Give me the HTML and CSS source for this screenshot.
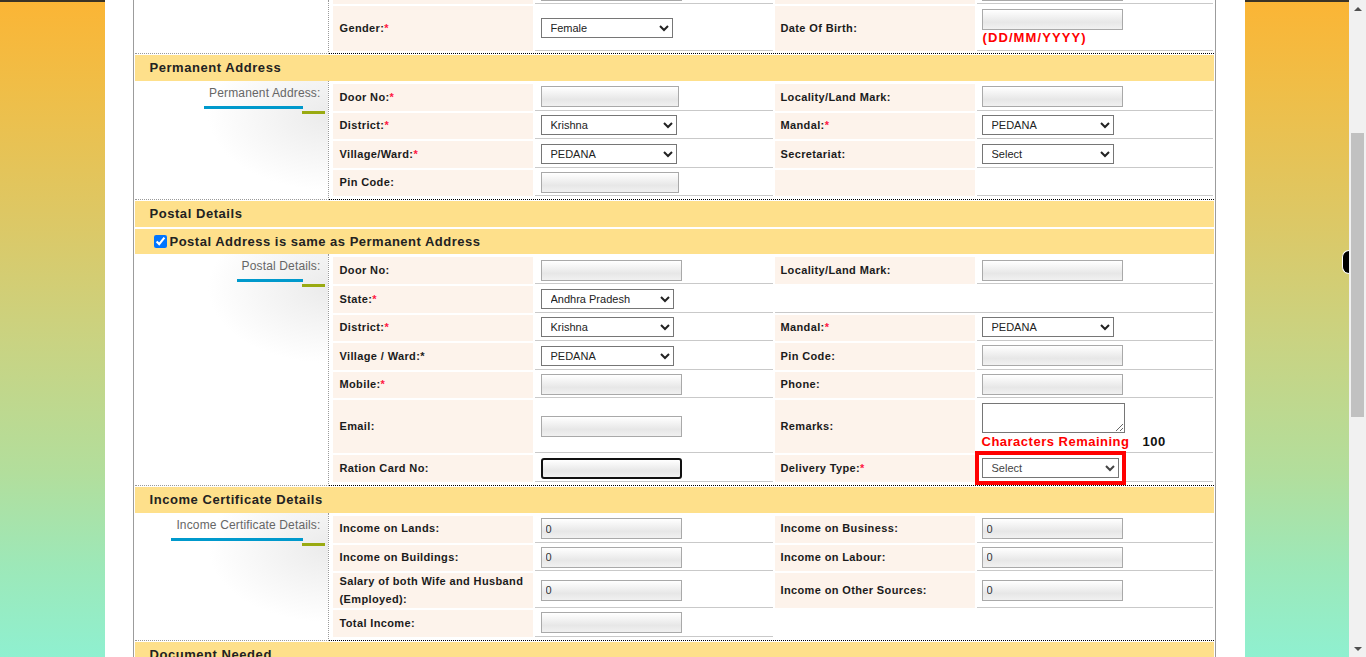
FILE: index.html
```html
<!DOCTYPE html>
<html lang="en">
<head>
<meta charset="utf-8">
<title>Income Certificate Application</title>
<link rel="stylesheet" href="styles.css">
</head>
<body>
<div class="screen">
  <div class="page">
    <div class="container">
      <div class="form">

        <section class="sec sec-first">
          <div class="sec-body">
            <div class="caption caption-plain"></div>
            <div class="fields">
              <div class="grid grid-first">
                <div class="lbl partial"></div>
                <div class="val partial bottom"><input class="txt" type="text"></div>
                <div class="lbl l2 partial"></div>
                <div class="val v2 partial bottom"><input class="txt push" type="text"></div>

                <div class="lbl">Gender:<span class="req">*</span></div>
                <div class="val"><select class="sel w132"><option>Female</option></select></div>
                <div class="lbl l2">Date Of Birth:</div>
                <div class="val v2 stack"><input class="txt" type="text"><div class="hint">(DD/MM/YYYY)</div></div>
              </div>
            </div>
          </div>
        </section>

        <section class="sec">
          <div class="sec-head">Permanent Address</div>
          <div class="sec-body">
            <div class="caption"><span class="cap-title">Permanent Address:</span></div>
            <div class="fields">
              <div class="grid">
                <div class="lbl">Door No:<span class="req">*</span></div>
                <div class="val"><input class="txt w138" type="text"></div>
                <div class="lbl l2">Locality/Land Mark:</div>
                <div class="val v2"><input class="txt" type="text"></div>

                <div class="lbl">District:<span class="req">*</span></div>
                <div class="val"><select class="sel w136"><option>Krishna</option></select></div>
                <div class="lbl l2">Mandal:<span class="req">*</span></div>
                <div class="val v2"><select class="sel w132"><option>PEDANA</option></select></div>

                <div class="lbl">Village/Ward:<span class="req">*</span></div>
                <div class="val"><select class="sel w136"><option>PEDANA</option></select></div>
                <div class="lbl l2">Secretariat:</div>
                <div class="val v2"><select class="sel w132"><option>Select</option></select></div>

                <div class="lbl">Pin Code:</div>
                <div class="val"><input class="txt w138" type="text"></div>
                <div class="lbl l2"></div>
                <div class="val v2"></div>
              </div>
            </div>
          </div>
        </section>

        <section class="sec">
          <div class="sec-head">Postal Details</div>
          <label class="sec-check"><input type="checkbox" checked>Postal Address is same as Permanent Address</label>
          <div class="sec-body">
            <div class="caption"><span class="cap-title">Postal Details:</span></div>
            <div class="fields">
              <div class="grid">
                <div class="lbl">Door No:</div>
                <div class="val"><input class="txt" type="text"></div>
                <div class="lbl l2">Locality/Land Mark:</div>
                <div class="val v2"><input class="txt" type="text"></div>

                <div class="lbl">State:<span class="req">*</span></div>
                <div class="val"><select class="sel w133"><option>Andhra Pradesh</option></select></div>
                <div class="val blank span2"></div>

                <div class="lbl">District:<span class="req">*</span></div>
                <div class="val"><select class="sel w133"><option>Krishna</option></select></div>
                <div class="lbl l2">Mandal:<span class="req">*</span></div>
                <div class="val v2"><select class="sel w132"><option>PEDANA</option></select></div>

                <div class="lbl">Village / Ward:*</div>
                <div class="val"><select class="sel w133"><option>PEDANA</option></select></div>
                <div class="lbl l2">Pin Code:</div>
                <div class="val v2"><input class="txt" type="text"></div>

                <div class="lbl">Mobile:<span class="req">*</span></div>
                <div class="val"><input class="txt" type="text"></div>
                <div class="lbl l2">Phone:</div>
                <div class="val v2"><input class="txt" type="text"></div>

                <div class="lbl">Email:</div>
                <div class="val"><input class="txt" type="text"></div>
                <div class="lbl l2">Remarks:</div>
                <div class="val v2 stack tallstack">
                  <textarea class="remarks"></textarea>
                  <div class="chars"><span class="chars-red">Characters Remaining</span><span class="chars-num">100</span></div>
                </div>

                <div class="lbl">Ration Card No:</div>
                <div class="val"><input class="txt focus" type="text"></div>
                <div class="lbl l2">Delivery Type:<span class="req">*</span></div>
                <div class="val v2"><select class="sel w137 flagged"><option>Select</option></select></div>
              </div>
            </div>
          </div>
        </section>

        <section class="sec">
          <div class="sec-head">Income Certificate Details</div>
          <div class="sec-body">
            <div class="caption"><span class="cap-title">Income Certificate Details:</span></div>
            <div class="fields">
              <div class="grid">
                <div class="lbl">Income on Lands:</div>
                <div class="val"><input class="txt" type="text" value="0"></div>
                <div class="lbl l2">Income on Business:</div>
                <div class="val v2"><input class="txt" type="text" value="0"></div>

                <div class="lbl">Income on Buildings:</div>
                <div class="val"><input class="txt" type="text" value="0"></div>
                <div class="lbl l2">Income on Labour:</div>
                <div class="val v2"><input class="txt" type="text" value="0"></div>

                <div class="lbl tall">Salary of both Wife and Husband (Employed):</div>
                <div class="val"><input class="txt" type="text" value="0"></div>
                <div class="lbl l2">Income on Other Sources:</div>
                <div class="val v2"><input class="txt" type="text" value="0"></div>

                <div class="lbl">Total Income:</div>
                <div class="val"><input class="txt" type="text"></div>
                <div class="blank span2 nob"></div>
              </div>
            </div>
          </div>
        </section>

        <section class="sec">
          <div class="sec-head">Document Needed</div>
        </section>

      </div>
    </div>
  </div>
  <div class="scrollbar">
    <div class="sb-btn up"></div>
    <div class="sb-track"><div class="sb-thumb"></div></div>
    <div class="sb-btn down"></div>
  </div>
</div>
<div class="pill"></div>
</body>
</html>
```

FILE: styles.css
```css
* { box-sizing: border-box; }
html, body { margin: 0; padding: 0; height: 657px; overflow: hidden; }
body {
  font-family: "Liberation Sans", Arial, sans-serif;
  font-size: 11px;
  color: #1b1b1b;
  background: #fff;
}
.screen { display: flex; height: 657px; }
.page {
  flex: 1;
  min-width: 0;
  height: 100%;
  overflow: hidden;
  background:
    linear-gradient(#3a3326 0 2px, transparent 2px),
    linear-gradient(180deg, #fbb535 0%, #efbe48 14%, #dcc866 34%, #c9d382 52%, #b2de9c 72%, #9de8b8 86%, #8ff0d0 100%);
}
.container {
  width: 1140px;
  margin: 0 auto;
  height: 100%;
  background: #fff;
  padding: 0 29px 0 28px;
}
.form {
  height: 100%;
  border-left: 1px solid #9c9c9c;
  border-right: 1px solid #9c9c9c;
  overflow: hidden;
}
.sec { margin: 0 1px; }
.sec-head {
  height: 26px;
  margin-top: 1px;
  background: #fee08b;
  padding-left: 15px;
  font-size: 13px;
  font-weight: bold;
  line-height: 26px;
  letter-spacing: 0.55px;
  color: #222;
}
.sec-check {
  height: 25px;
  margin-top: 2px;
  background: #fee08b;
  display: flex;
  align-items: center;
  padding-left: 19px;
  font-size: 13px;
  font-weight: bold;
  letter-spacing: 0.5px;
  color: #222;
}
.sec-check input { width: 13px; height: 13px; margin: 0 3px 0 0; }

.sec-body { display: flex; }
.caption {
  width: 194px;
  flex: none;
  border-right: 1px dotted #9a9a9a;
  border-bottom: 1px dotted #9a9a9a;
  text-align: right;
  padding: 5px 3px 0 0;
  background: radial-gradient(ellipse 120px 75px at 100% 34px, #ebebeb 0%, #f3f3f3 40%, rgba(255,255,255,0) 100%) no-repeat;
}
.caption-plain { background: none; }
.cap-title {
  display: inline-block;
  font-size: 12px;
  line-height: 14px;
  letter-spacing: 0.15px;
  color: #666;
  padding: 0 4px 14px 5px;
  background-image: linear-gradient(#0099cc, #0099cc), linear-gradient(#99aa11, #99aa11);
  background-repeat: no-repeat;
  background-size: calc(100% - 22px) 3px, 23px 3px;
  background-position: left bottom 5px, right bottom;
}
.fields {
  flex: 1;
  border-bottom: 1px dotted #000;
  padding: 3px 1px 3px 4px;
}
.sec-first .fields { padding-top: 0; padding-bottom: 2px; }
.grid {
  display: grid;
  grid-template-columns: 200px 238px 200px 236px;
  grid-auto-rows: minmax(26.6px, auto);
  gap: 2px;
}
.grid-first { grid-template-rows: 4px 45px; }

.lbl {
  background: #fdf3eb;
  padding: 0 6px 0 7px;
  display: flex;
  align-items: center;
  font-weight: bold;
  font-size: 11px;
  line-height: 17.5px;
  letter-spacing: 0.37px;
  color: #1b1b1b;
}
.lbl.l2 { padding-left: 6px; }
.lbl.tall { min-height: 35px; }
.req { color: #ff1744; }

.val {
  display: flex;
  align-items: center;
  padding-left: 6px;
  border-bottom: 1px solid #c9c9c9;
}
.val.v2 { padding-left: 5px; }
.val.stack { display: block; padding-top: 3px; }
.val.tallstack { padding-bottom: 3px; }
.partial { overflow: hidden; }
.val.bottom { align-items: flex-end; }
.val.bottom .txt { margin-bottom: 2px; flex: none; }
.push { margin-left: auto; margin-right: 3px; }
.span2 { grid-column: span 2; }
.nob { border-bottom: 0; }

.txt {
  width: 141px;
  height: 21px;
  border: 1px solid #a9a9a9;
  border-radius: 0;
  background: linear-gradient(#ffffff, #e7e7e7 65%, #f1f1f1);
  font-family: "Liberation Sans", Arial, sans-serif;
  font-size: 11px;
  color: #333;
  padding: 0 4px;
  margin: 0;
  outline: none;
}
.txt.w138 { width: 138px; }
.txt.focus { border: 2px solid #111; border-radius: 3px; padding: 0 3px; }

.sel {
  height: 20px;
  border: 1px solid #767676;
  border-radius: 0;
  background: #fff;
  font-family: "Liberation Sans", Arial, sans-serif;
  font-size: 11px;
  color: #222;
  padding: 0 0 0 5px;
  margin: 0;
}
.w132 { width: 132px; }
.w133 { width: 133px; }
.w136 { width: 136px; }
.w137 { width: 137px; }
.flagged { outline: 4px solid #ff0000; outline-offset: 3px; color: #444; }

.hint {
  color: #ff0000;
  font-weight: bold;
  font-size: 13px;
  line-height: 15px;
  letter-spacing: 1.1px;
  margin-top: 0;
  padding-left: 1px;
}
.remarks {
  display: block;
  width: 143px;
  height: 30px;
  border: 1px solid #767676;
  border-radius: 0;
  background: #fff;
  margin: 0;
  padding: 2px;
  font-family: "Liberation Sans", Arial, sans-serif;
  font-size: 11px;
}
.chars {
  font-size: 13px;
  font-weight: bold;
  line-height: 15px;
  letter-spacing: 0.5px;
  margin-top: 1px;
}
.chars-red { color: #ff0000; }
.chars-num { color: #111; margin-left: 13px; }

.scrollbar {
  width: 17px;
  flex: none;
  background: #f1f1f1;
  display: flex;
  flex-direction: column;
}
.sb-btn {
  height: 17px;
  flex: none;
  display: flex;
  align-items: center;
  justify-content: center;
}
.sb-btn.up::before {
  content: "";
  border-left: 4px solid transparent;
  border-right: 4px solid transparent;
  border-bottom: 4px solid #505050;
}
.sb-btn.down::before {
  content: "";
  border-left: 4px solid transparent;
  border-right: 4px solid transparent;
  border-top: 4px solid #505050;
}
.sb-track { flex: 1; padding-top: 116px; }
.sb-thumb { height: 284px; margin: 0 2px; background: #c1c1c1; }

.pill {
  position: fixed;
  right: 17px;
  top: 250px;
  width: 7px;
  height: 24px;
  background: #000;
  border: 1px solid #fff;
  border-right: 0;
  border-radius: 7px 0 0 7px;
}
```
